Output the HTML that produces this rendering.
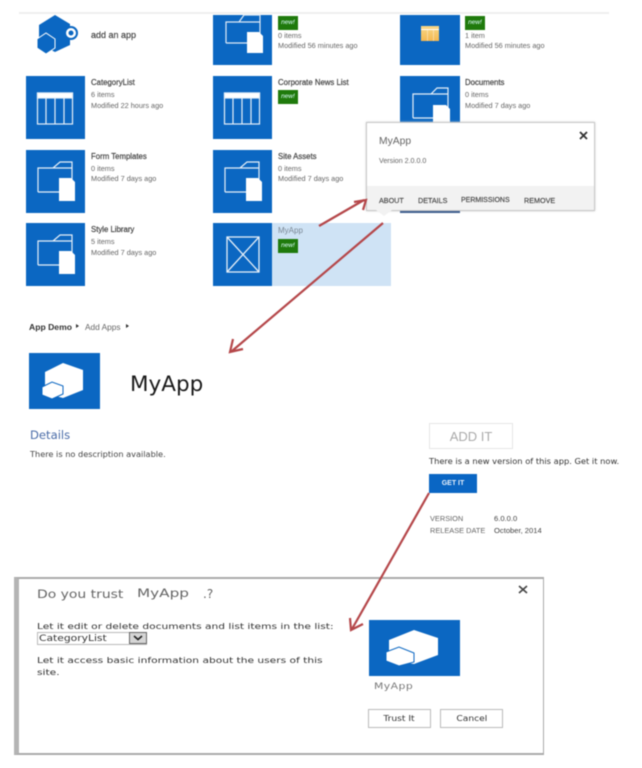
<!DOCTYPE html>
<html><head><meta charset="utf-8"><style>
html,body{margin:0;padding:0;background:#fff}
#p{position:relative;width:642px;height:768px;overflow:hidden;background:#fff;font-family:"Liberation Sans",sans-serif;filter:blur(.55px)}
#p div{position:absolute;white-space:nowrap}
.tile{background:#0b67c2}
.t{font-size:7.8px;color:#444;line-height:10px;-webkit-text-stroke:.2px #444}
.s{font-size:7.3px;color:#666;line-height:10px}
.tab{font-size:7.2px;color:#444;line-height:10px;-webkit-text-stroke:.15px #444}
.new{width:20px;height:14px;background:#1f7a0c;color:#dff;font-size:6.5px;line-height:14px;text-align:center;font-style:italic}
.wide{font-family:"DejaVu Sans",sans-serif}
.sx{transform-origin:0 50%}
.btn span{display:inline-block;transform:scaleX(1.2)}
svg{position:absolute;overflow:visible}
</style></head><body><div id="p">
<div style="left:19px;top:12px;width:590px;height:2px;background:#eee"></div>

<svg style="left:36px;top:14px" width="45" height="42" viewBox="0 0 45 42"><path d="M3 11L19 1L34 10V31L19 38L3 30Z" fill="#0b67c2"/><path d="M1 25L10 19L19 25V34L10 40L1 34Z" fill="#0b67c2" stroke="#fff" stroke-width="1"/><circle cx="35" cy="19" r="6" fill="#fff" stroke="#0b67c2" stroke-width="2"/><circle cx="35" cy="19" r="2.5" fill="#0b67c2"/></svg>
<div class="t" style="left:91px;top:30px;font-size:9px">add an app</div>

<div class="tile" style="left:213px;top:15px;width:59px;height:50px"></div>
<svg style="left:213px;top:15px" width="59" height="50" fill="none" stroke="#dfeaf6" stroke-width="1.2"><path d="M13 28V7H26L31 0H47V7M13 7H47V28H13"/><path d="M34 17H46L50 21V38H34Z" fill="#fff" stroke="none"/></svg>
<div class="new" style="left:278px;top:16px">new!</div>
<div class="s" style="left:278px;top:31px">0 items</div>
<div class="s" style="left:278px;top:41px">Modified 56 minutes ago</div>

<div class="tile" style="left:400px;top:15px;width:60px;height:50px"></div>
<div style="left:421px;top:26px;width:18px;height:15px;background:linear-gradient(#f8d889,#f5b850)"></div>
<div style="left:421px;top:29px;width:18px;height:1px;background:#fff"></div>
<div style="left:427px;top:30px;width:1px;height:11px;background:#fff6"></div>
<div style="left:433px;top:30px;width:1px;height:11px;background:#fff6"></div>
<div class="new" style="left:465px;top:16px">new!</div>
<div class="s" style="left:465px;top:31px">1 item</div>
<div class="s" style="left:465px;top:41px">Modified 56 minutes ago</div>

<div class="tile" style="left:26px;top:76px;width:59px;height:63px"></div>
<svg style="left:26px;top:76px" width="59" height="63" fill="none" stroke="#e6eff8" stroke-width="1.2"><rect x="11.5" y="17" width="35" height="31"/><rect x="11.5" y="17" width="35" height="5" fill="#fff"/><path d="M20 22V48M29 22V48M38 22V48"/></svg>
<div class="t" style="left:91px;top:78px">CategoryList</div>
<div class="s" style="left:91px;top:90px">6 items</div>
<div class="s" style="left:91px;top:101px">Modified 22 hours ago</div>

<div class="tile" style="left:213px;top:76px;width:59px;height:63px"></div>
<svg style="left:213px;top:76px" width="59" height="63" fill="none" stroke="#e6eff8" stroke-width="1.2"><rect x="11.5" y="17" width="35" height="31"/><rect x="11.5" y="17" width="35" height="5" fill="#fff"/><path d="M20 22V48M29 22V48M38 22V48"/></svg>
<div class="t" style="left:278px;top:78px">Corporate News List</div>
<div class="new" style="left:278px;top:90px">new!</div>

<div class="tile" style="left:400px;top:76px;width:60px;height:137px"></div>
<svg style="left:400px;top:76px" width="60" height="63" fill="none" stroke="#e6eff8" stroke-width="1.2"><path d="M13 42V18H31L37 12H48V18M13 18H48V42H13"/><path d="M33 29H46L50 33V48H33Z" fill="#fff" stroke="none"/></svg>
<div class="t" style="left:465px;top:78px">Documents</div>
<div class="s" style="left:465px;top:90px">0 items</div>
<div class="s" style="left:465px;top:101px">Modified 7 days ago</div>

<div class="tile" style="left:26px;top:150px;width:59px;height:63px"></div>
<svg style="left:26px;top:150px" width="59" height="63" fill="none" stroke="#e6eff8" stroke-width="1.2"><path d="M12 42V18H27L34 12H46V18M12 18H46V42H12"/><path d="M33 28H45L49 32V51H33Z" fill="#fff" stroke="none"/></svg>
<div class="t" style="left:91px;top:152px">Form Templates</div>
<div class="s" style="left:91px;top:164px">0 items</div>
<div class="s" style="left:91px;top:174px">Modified 7 days ago</div>

<div class="tile" style="left:213px;top:150px;width:59px;height:63px"></div>
<svg style="left:213px;top:150px" width="59" height="63" fill="none" stroke="#e6eff8" stroke-width="1.2"><path d="M12 42V18H27L34 12H46V18M12 18H46V42H12"/><path d="M33 28H45L49 32V51H33Z" fill="#fff" stroke="none"/></svg>
<div class="t" style="left:278px;top:152px">Site Assets</div>
<div class="s" style="left:278px;top:164px">0 items</div>
<div class="s" style="left:278px;top:174px">Modified 7 days ago</div>

<div class="tile" style="left:26px;top:223px;width:59px;height:63px"></div>
<svg style="left:26px;top:223px" width="59" height="63" fill="none" stroke="#e6eff8" stroke-width="1.2"><path d="M12 42V18H27L34 12H46V18M12 18H46V42H12"/><path d="M33 28H45L49 32V51H33Z" fill="#fff" stroke="none"/></svg>
<div class="t" style="left:91px;top:225px">Style Library</div>
<div class="s" style="left:91px;top:237px">5 items</div>
<div class="s" style="left:91px;top:248px">Modified 7 days ago</div>

<div style="left:272px;top:223px;width:119px;height:63px;background:#cfe3f5"></div>
<div class="tile" style="left:213px;top:223px;width:59px;height:63px"></div>
<svg style="left:213px;top:223px" width="59" height="63" fill="none" stroke="#e6eff8" stroke-width="1.3"><rect x="14" y="14" width="32" height="35"/><path d="M14 14L46 49M46 14L14 49"/></svg>
<div class="s" style="left:278px;top:226px;color:#7a8794;font-size:8px">MyApp</div>
<div class="new" style="left:278px;top:239px">new!</div>

<div style="left:366px;top:122px;width:227px;height:87px;background:#fff;border:1px solid #c8c8c8;box-shadow:0 0 2px #ccc"></div>
<div style="left:367px;top:186px;width:227px;height:24px;background:#f2f2f2"></div>
<svg style="left:376px;top:210px" width="16" height="7"><path d="M0 0H16L8 6Z" fill="#f2f2f2" stroke="none"/></svg>
<div style="left:379px;top:134px;font-size:10.3px;color:#666;line-height:16px">MyApp</div>
<div class="s" style="left:379px;top:156px;font-size:7.1px">Version 2.0.0.0</div>
<svg style="left:578px;top:131px" width="11" height="10" stroke="#333" stroke-width="1.8"><path d="M2 1L9 8M9 1L2 8"/></svg>
<div class="tab" style="left:379px;top:196px">ABOUT</div>
<div class="tab" style="left:418px;top:196px">DETAILS</div>
<div class="tab" style="left:461px;top:196px;font-size:7px;line-height:10px">PERMISSIONS</div>
<div class="tab" style="left:524px;top:196px">REMOVE</div>
<div style="left:400px;top:211px;width:60px;height:2px;background:#3f5f8f"></div>

<div class="t" style="left:29px;top:322px;font-size:8.6px;font-weight:bold;color:#333;-webkit-text-stroke:0">App Demo</div>
<div style="left:76px;top:324px;width:0;height:0;border-left:3px solid #333;border-top:2.5px solid transparent;border-bottom:2.5px solid transparent"></div>
<div class="s" style="left:85px;top:322px;font-size:8.3px">Add Apps</div>
<div style="left:126px;top:324px;width:0;height:0;border-left:3px solid #333;border-top:2.5px solid transparent;border-bottom:2.5px solid transparent"></div>

<div class="tile" style="left:29px;top:353px;width:71px;height:56px"></div>
<svg style="left:29px;top:353px" width="71" height="56"><path d="M16 19L34 10L54 17V37L34 45L16 40Z" fill="#fff"/><path d="M13 34L23 29L34 33V41L23 46L13 42Z" fill="#fff" stroke="#0b67c2" stroke-width="1"/></svg>
<div class="wide" style="left:130px;top:372px;font-size:21.5px;line-height:25px;color:#1a1a1a">MyApp</div>
<div class="wide" style="left:30px;top:428px;font-size:11.6px;line-height:14px;color:#4a6ca8">Details</div>
<div class="wide" style="left:30px;top:449px;font-size:8.2px;line-height:10px;color:#444">There is no description available.</div>

<div style="left:429px;top:423px;width:82px;height:24px;border:1px solid #e6e6e6;text-align:center;font-size:13px;line-height:25px;color:#aaa">ADD IT</div>
<div class="wide" style="left:429px;top:456px;font-size:8.3px;line-height:10px;color:#333">There is a new version of this app. Get it now.</div>
<div style="left:429px;top:474px;width:48px;height:19px;background:#0a66c4;color:#e8f1fb;text-align:center;font-size:7px;line-height:19px;font-weight:bold">GET IT</div>
<div class="s" style="left:430px;top:514px;font-size:7.4px">VERSION</div>
<div class="s" style="left:430px;top:526px;font-size:7.4px">RELEASE DATE</div>
<div class="s" style="left:494px;top:514px;font-size:7.6px;color:#444">6.0.0.0</div>
<div class="s" style="left:494px;top:526px;font-size:7.6px;color:#444">October, 2014</div>

<div style="left:14px;top:577px;width:524px;height:174px;background:#fff;border:2px solid #aaa;border-left:5px solid #b4b4b4;border-top-width:2px;border-right-width:1.5px"></div>
<div class="wide sx" style="left:37px;top:587px;font-size:11.5px;line-height:15px;color:#666;transform:scaleX(1.21)">Do you trust</div>
<div class="wide sx" style="left:137px;top:586px;font-size:11.3px;line-height:15px;color:#666;transform:scaleX(1.35)">MyApp</div>
<div class="wide" style="left:203px;top:587px;font-size:12px;line-height:15px;color:#666">.?</div>
<svg style="left:517px;top:584px" width="12" height="12" stroke="#444" stroke-width="1.6"><path d="M2 2L10 9M10 2L2 9"/></svg>
<div class="wide sx" style="left:37px;top:621px;font-size:8.2px;line-height:10px;color:#333;transform:scaleX(1.3)">Let it edit or delete documents and list items in the list:</div>
<div style="left:37px;top:632px;width:108px;height:11px;border:1px solid #bbb;background:#fff"></div>
<div class="wide sx" style="left:39px;top:633px;font-size:8.4px;line-height:11px;color:#333;transform:scaleX(1.28)">CategoryList</div>
<div style="left:129px;top:632px;width:18px;height:12px;background:#d5d5d5;border:1px solid #666;box-sizing:border-box"></div>
<svg style="left:133px;top:635px" width="10" height="6" fill="none" stroke="#222" stroke-width="1.6"><path d="M1 1L5 4.5L9 1"/></svg>
<div class="wide sx" style="left:37px;top:655px;font-size:8.2px;line-height:11.5px;color:#333;transform:scaleX(1.3)">Let it access basic information about the users of this<br>site.</div>

<div class="tile" style="left:369px;top:620px;width:91px;height:56px"></div>
<svg style="left:369px;top:620px" width="91" height="56"><path d="M20 20L45 10L69 18V35L45 44L20 40Z" fill="#fff"/><path d="M17 32L30 27L45 33V42L30 46L17 41Z" fill="#fff" stroke="#0b67c2" stroke-width="1"/></svg>
<div class="wide sx" style="left:374px;top:681px;font-size:9px;line-height:12px;color:#777;letter-spacing:.4px;transform:scaleX(1.2)">MyApp</div>
<div class="wide btn" style="left:368px;top:709px;width:61px;height:17px;border:1px solid #bbb;text-align:center;font-size:7.6px;line-height:18px;color:#333"><span>Trust It</span></div>
<div class="wide btn" style="left:440px;top:709px;width:61px;height:17px;border:1px solid #bbb;text-align:center;font-size:7.6px;line-height:18px;color:#333"><span>Cancel</span></div>

<svg style="left:0;top:0" width="642" height="768" fill="none" stroke="#b5474a" stroke-width="2.2">
<path d="M319 226L364 200"/><path d="M354 202L366 200L363 210" stroke-width="2.2"/>
<path d="M383 223L232 351"/><path d="M233 339L230 352L243 349" stroke-width="2.2"/>
<path d="M429 493L352 629"/><path d="M350 618L351 630L363 624" stroke-width="2.2"/>
</svg>
</div></body></html>
